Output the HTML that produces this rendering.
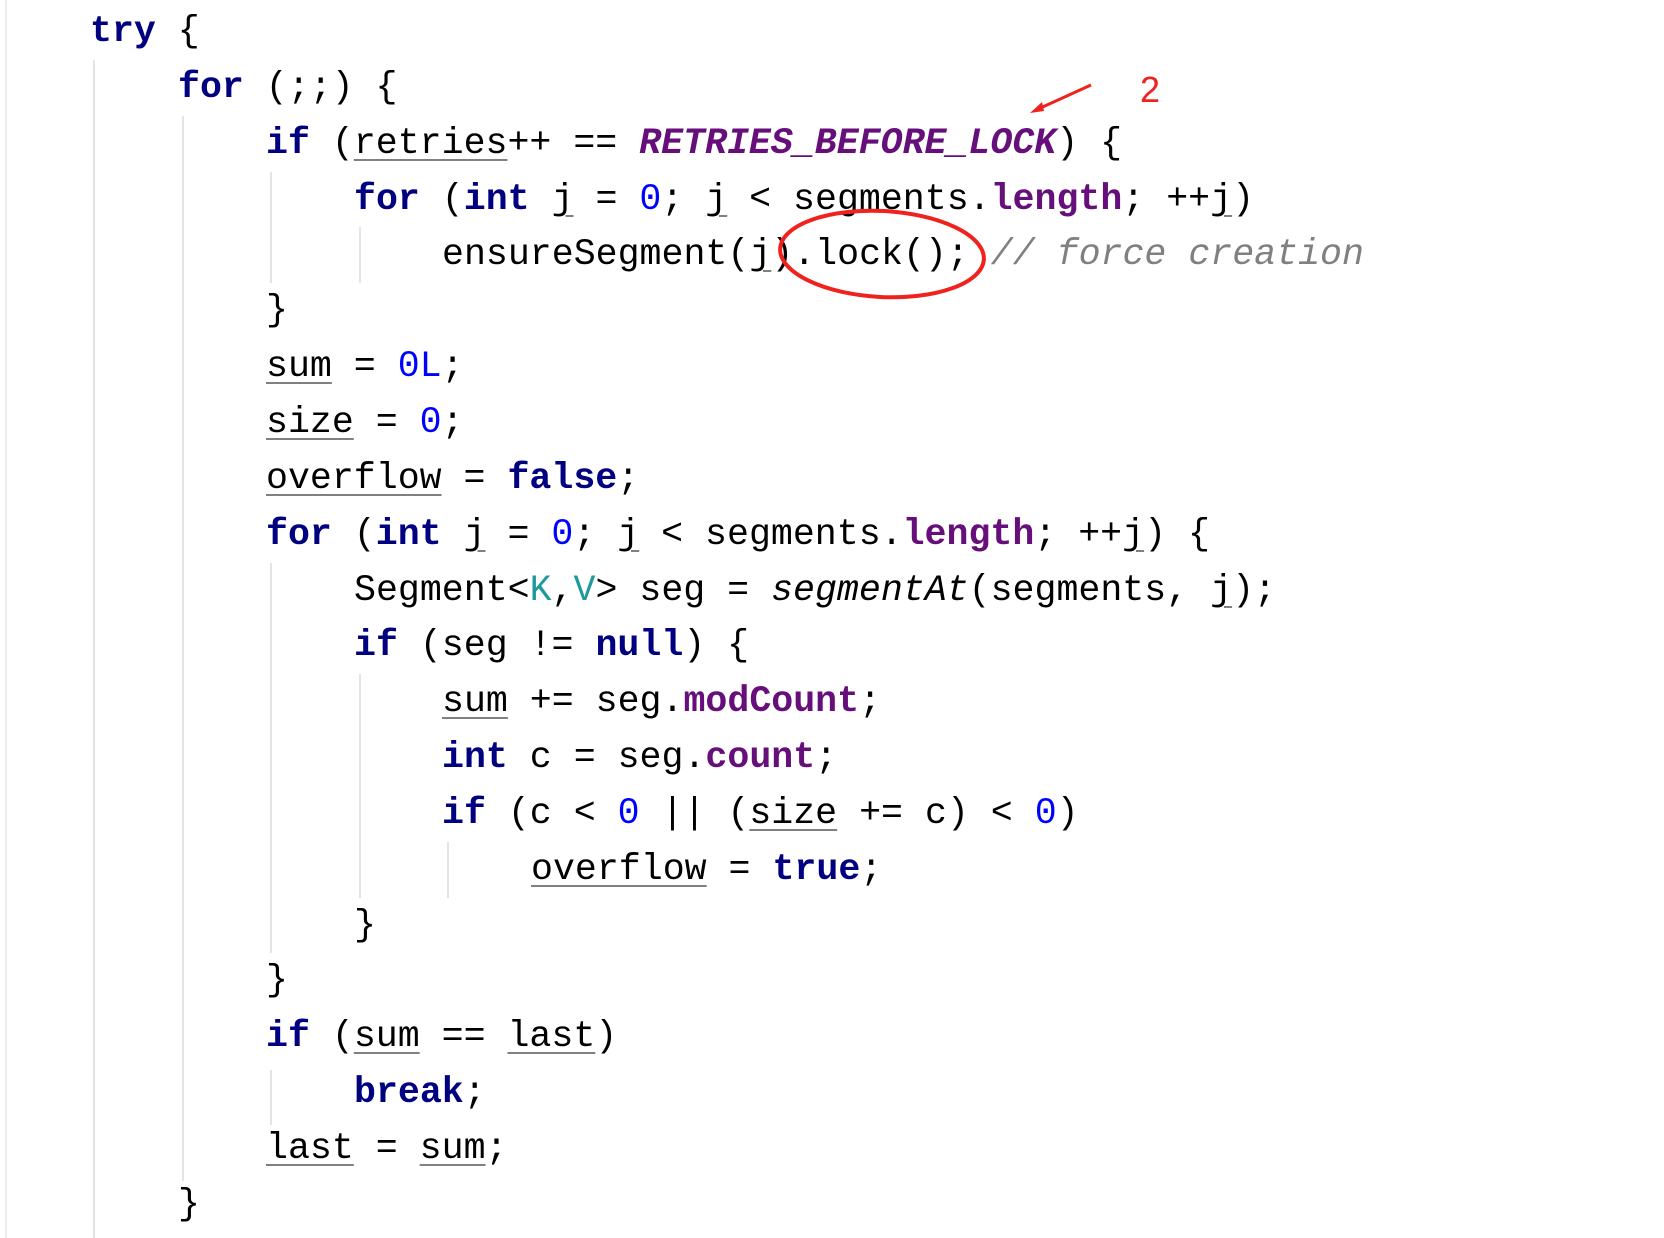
<!DOCTYPE html>
<html><head><meta charset="utf-8"><style>
html,body{margin:0;padding:0;background:#fff;width:1664px;height:1238px;overflow:hidden;position:relative}
.l{position:absolute;white-space:pre;font-family:"Liberation Mono",monospace;font-size:36.6px;line-height:56px;color:#000;height:56px}
.k{color:#000080;font-weight:bold}
.n{color:#0000ff}
.f{color:#660e7a;font-weight:bold}
.c{color:#660e7a;font-weight:bold;font-style:italic}
.cm{color:#808080;font-style:italic}
.t{color:#20999d}
.i{font-style:italic}
.u{text-decoration:underline;text-decoration-color:#808080;text-decoration-thickness:2px;text-underline-offset:6px}
.g{position:absolute;width:2px;background:#e4e4e4}
</style></head><body>
<div class="g" style="left:5px;top:0;height:1238px;background:#ececec"></div>
<div class="g" style="left:93px;top:60px;height:1178px"></div>
<div class="g" style="left:182px;top:116px;height:1065px"></div>
<div class="g" style="left:270px;top:172px;height:111px"></div>
<div class="g" style="left:270px;top:563px;height:390px"></div>
<div class="g" style="left:270px;top:1070px;height:55px"></div>
<div class="g" style="left:359px;top:227px;height:56px"></div>
<div class="g" style="left:359px;top:674px;height:224px"></div>
<div class="g" style="left:447px;top:842px;height:56px"></div>

<div class="l" style="top:4px;left:90px"><span class="k">try</span> {</div>
<div class="l" style="top:60px;left:178px"><span class="k">for</span> (;;) {</div>
<div class="l" style="top:116px;left:266px"><span class="k">if</span> (<span class="u">retries</span>++ == <span class="c">RETRIES_BEFORE_LOCK</span>) {</div>
<div class="l" style="top:172px;left:354px"><span class="k">for</span> (<span class="k">int</span> <span class="u">j</span> = <span class="n">0</span>; <span class="u">j</span> &lt; segments.<span class="f">length</span>; ++<span class="u">j</span>)</div>
<div class="l" style="top:227px;left:442px">ensureSegment(<span class="u">j</span>).lock(); <span class="cm">// force creation</span></div>
<div class="l" style="top:283px;left:266px">}</div>
<div class="l" style="top:339px;left:266px"><span class="u">sum</span> = <span class="n">0L</span>;</div>
<div class="l" style="top:395px;left:266px"><span class="u">size</span> = <span class="n">0</span>;</div>
<div class="l" style="top:451px;left:266px"><span class="u">overflow</span> = <span class="k">false</span>;</div>
<div class="l" style="top:507px;left:266px"><span class="k">for</span> (<span class="k">int</span> <span class="u">j</span> = <span class="n">0</span>; <span class="u">j</span> &lt; segments.<span class="f">length</span>; ++<span class="u">j</span>) {</div>
<div class="l" style="top:563px;left:354px">Segment&lt;<span class="t">K</span>,<span class="t">V</span>&gt; seg = <span class="i">segmentAt</span>(segments, <span class="u">j</span>);</div>
<div class="l" style="top:618px;left:354px"><span class="k">if</span> (seg != <span class="k">null</span>) {</div>
<div class="l" style="top:674px;left:442px"><span class="u">sum</span> += seg.<span class="f">modCount</span>;</div>
<div class="l" style="top:730px;left:442px"><span class="k">int</span> c = seg.<span class="f">count</span>;</div>
<div class="l" style="top:786px;left:442px"><span class="k">if</span> (c &lt; <span class="n">0</span> || (<span class="u">size</span> += c) &lt; <span class="n">0</span>)</div>
<div class="l" style="top:842px;left:531px"><span class="u">overflow</span> = <span class="k">true</span>;</div>
<div class="l" style="top:898px;left:354px">}</div>
<div class="l" style="top:953px;left:266px">}</div>
<div class="l" style="top:1009px;left:266px"><span class="k">if</span> (<span class="u">sum</span> == <span class="u">last</span>)</div>
<div class="l" style="top:1065px;left:354px"><span class="k">break</span>;</div>
<div class="l" style="top:1121px;left:266px"><span class="u">last</span> = <span class="u">sum</span>;</div>
<div class="l" style="top:1177px;left:178px">}</div>

<svg width="1664" height="1238" style="position:absolute;left:0;top:0">
<ellipse cx="882" cy="254" rx="102" ry="43" fill="none" stroke="#f0221d" stroke-width="4" transform="rotate(3 882 254)"/>
<line x1="1091" y1="85" x2="1036" y2="110" stroke="#f0221d" stroke-width="3"/>
<polygon points="1030,113 1042,102 1044,111" fill="#f0221d"/>
<text x="1140" y="102" font-family="Liberation Sans, sans-serif" font-size="36" fill="#f0221d">2</text>
</svg>
</body></html>
